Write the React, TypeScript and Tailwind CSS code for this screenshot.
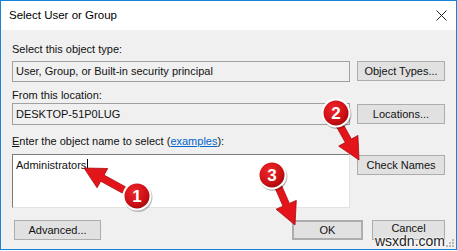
import React from "react";

type Pt = [number, number];

const arrowPoints = (from: Pt, tip: Pt, head = 20, half = 10, shaft = 3) => {
  const dx = tip[0] - from[0];
  const dy = tip[1] - from[1];
  const len = Math.hypot(dx, dy);
  const ux = dx / len;
  const uy = dy / len;
  const px = -uy;
  const py = ux;
  const bx = tip[0] - ux * head;
  const by = tip[1] - uy * head;
  const pts: Pt[] = [
    [from[0] + px * shaft, from[1] + py * shaft],
    [bx + px * shaft, by + py * shaft],
    [bx + px * half, by + py * half],
    tip,
    [bx - px * half, by - py * half],
    [bx - px * shaft, by - py * shaft],
    [from[0] - px * shaft, from[1] - py * shaft],
  ];
  return pts.map((p) => p.map((v) => v.toFixed(1)).join(",")).join(" ");
};

const Marker = ({ cx, cy, n }: { cx: number; cy: number; n: string }) => (
  <g>
    <circle cx={cx + 1} cy={cy + 1.5} r={14.5} fill="#00000040" />
    <circle cx={cx} cy={cy} r={13.5} fill="url(#redball)" stroke="#ffffff" strokeWidth={2} />
    <text
      x={cx}
      y={cy + 6}
      textAnchor="middle"
      fontFamily="Liberation Sans, Arial, sans-serif"
      fontWeight="bold"
      fontSize="17"
      fill="#ffffff"
    >
      {n}
    </text>
  </g>
);

const Btn = ({ children, className = "" }: { children: React.ReactNode; className?: string }) => (
  <div
    className={`flex h-[20px] items-center justify-center border border-[#adadad] bg-[#e1e1e1] text-[11px] text-[#111] ${className}`}
  >
    {children}
  </div>
);

export default function App() {
  return (
    <div className="h-[251px] w-[457px] bg-white font-['Liberation_Sans',Arial,sans-serif] text-[#111]">
      <div className="relative flex h-[250px] w-[457px] flex-col overflow-hidden border border-[#1883d7] bg-[#f0f0f0]">
        {/* title bar */}
        <div className="flex h-[29px] shrink-0 items-center justify-between bg-white pl-[8px] pr-[9px]">
          <span className="text-[11.5px] text-black">Select User or Group</span>
          <svg width="11" height="11" viewBox="0 0 11 11">
            <path d="M0.5 0.5 L10.5 10.5 M10.5 0.5 L0.5 10.5" stroke="#222" strokeWidth="1" />
          </svg>
        </div>

        <div className="flex flex-col px-[11px] pt-[13px] text-[11px] leading-[13px]">
          <div>Select this object type:</div>
          <div className="mt-[5px] grid grid-cols-[1fr_88px] items-start gap-x-[7px]">
            <div className="flex h-[21px] items-center border border-[#a0a0a0] bg-[#f0f0f0] pl-[3px]">
              User, Group, or Built-in security principal
            </div>
            <Btn>Object Types...</Btn>
          </div>

          <div className="mt-[7px]">From this location:</div>
          <div className="mt-[1px] grid grid-cols-[1fr_88px] items-start gap-x-[7px]">
            <div className="flex h-[22px] items-center border border-[#a0a0a0] bg-[#f0f0f0] pl-[3px]">
              DESKTOP-51P0LUG
            </div>
            <Btn className="mt-[1px]">Locations...</Btn>
          </div>

          <div className="mt-[10px]">
            <span className="underline">E</span>nter the object name to select (
            <span className="text-[#0066cc] underline">examples</span>):
          </div>
          <div className="mt-[6px] grid grid-cols-[1fr_88px] items-start gap-x-[7px]">
            <div className="h-[54px] border border-[#7a7a7a] border-b-[#e3e3e3] border-r-[#e3e3e3] bg-white pl-[3px] pt-[2px]">
              Administrators
              <span className="ml-[1px] inline-block h-[12px] w-[1px] translate-y-[2px] bg-black" />
            </div>
            <Btn className="mt-[1px]">Check Names</Btn>
          </div>

          <div className="mt-[12px] flex items-start">
            <Btn className="ml-[2px] w-[87px]">Advanced...</Btn>
            <div className="flex-1" />
            <Btn className="w-[71px] border-2 border-[#0078d7]">OK</Btn>
            <Btn className="ml-[9px] w-[73px] items-start pt-[1px]">Cancel</Btn>
          </div>
        </div>

        {/* watermark + grip */}
        <div className="absolute bottom-0 right-[11px] text-[14px] leading-[15px] text-[#222] [text-shadow:0_0_2px_#fff,0_0_2px_#fff,0_0_2px_#fff]">
          wsxdn.com
        </div>
        <svg className="absolute bottom-[1px] right-[1px]" width="9" height="9" viewBox="0 0 9 9">
          <rect x="6" y="0" width="2" height="2" fill="#b8b8b8" />
          <rect x="3" y="3" width="2" height="2" fill="#b8b8b8" />
          <rect x="6" y="3" width="2" height="2" fill="#b8b8b8" />
          <rect x="0" y="6" width="2" height="2" fill="#b8b8b8" />
          <rect x="3" y="6" width="2" height="2" fill="#b8b8b8" />
          <rect x="6" y="6" width="2" height="2" fill="#b8b8b8" />
        </svg>

        {/* annotations */}
        <svg className="pointer-events-none absolute left-[-1px] top-[-1px]" width="457" height="251" viewBox="0 0 457 251">
          <defs>
            <radialGradient id="redball" cx="40%" cy="35%" r="70%">
              <stop offset="0%" stopColor="#f0262a" />
              <stop offset="70%" stopColor="#c80f14" />
              <stop offset="100%" stopColor="#8e0a0c" />
            </radialGradient>
          </defs>
          <g fill="#e3141a" stroke="#a50d10" strokeWidth="0.8" strokeLinejoin="round">
            <polygon points={arrowPoints([124, 190], [84, 168], 21, 11, 3.5)} />
            <polygon points={arrowPoints([339, 124], [359, 160], 22, 11, 3.5)} />
            <polygon points={arrowPoints([278, 186], [295, 225], 22, 11, 3.5)} />
          </g>
          <Marker cx={137} cy={196} n="1" />
          <Marker cx={336} cy={113} n="2" />
          <Marker cx={272} cy={175} n="3" />
        </svg>
      </div>
    </div>
  );
}
